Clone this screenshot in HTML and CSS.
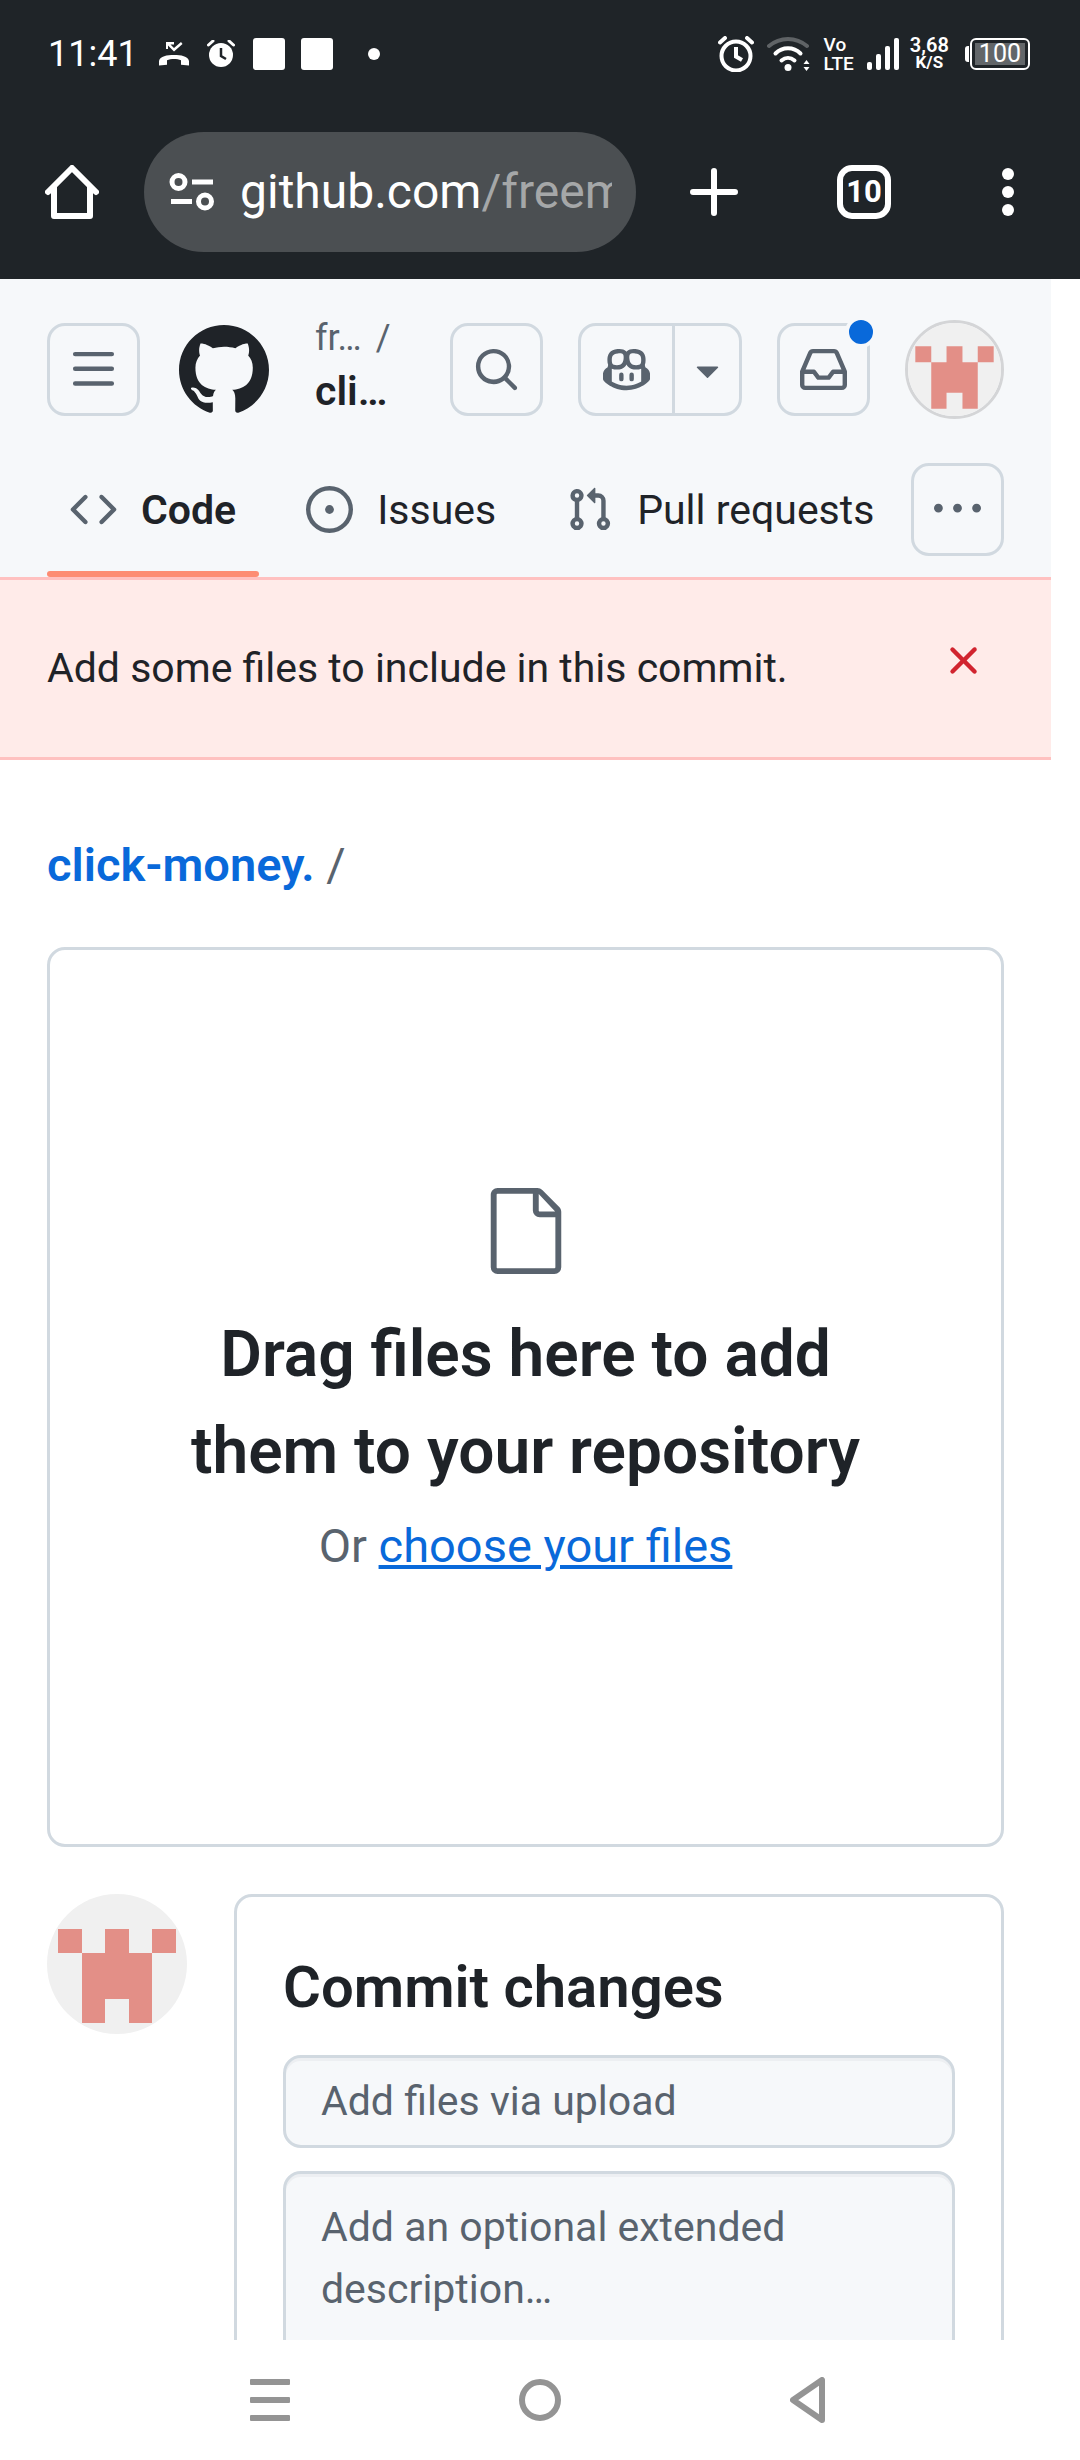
FILE: index.html
```html
<!DOCTYPE html>
<html lang="en">
<head>
<meta charset="utf-8">
<meta name="viewport" content="width=device-width, initial-scale=1">
<title>Upload files · click-money.</title>
<link rel="stylesheet" href="styles.css">
</head>
<body>
<svg class="defs" aria-hidden="true">
  <symbol id="identicon" viewBox="0 0 140 140">
    <rect width="140" height="140" fill="#f0f0f0"/>
    <path fill="#e38f87" d="M11 35h24v24h23V35h24v24h23V35h24v24h-24v70H82v-24H58v24H35V59H11Z"/>
  </symbol>
</svg>

<div class="device-top">
  <div class="status">
    <div class="status-left">
      <span class="clock">11:41</span>
      <svg width="30" height="26" viewBox="0 0 30 26" fill="#fff"><path d="M7 1h8v2.500H11.500L15 7l7-6 1.500 2L15 10.500 9 4.500V8H7Z"/><path d="M0 24.500V20c1-5 8-6 15-6s14 1 15 6v4.500l-8-.8v-4.500c-4-1.500-10-1.500-14 0v4.500Z"/></svg>
      <svg width="28" height="28" viewBox="0 0 28 28"><circle cx="14" cy="15" r="12" fill="#fff"/><path d="M1.500 5 6 1M22 1l4.500 4" stroke="#fff" stroke-width="3" stroke-linecap="round"/><path d="M14 8v8l5 3" stroke="#1f2428" stroke-width="2.500" fill="none"/></svg>
      <span class="square"></span>
      <span class="square"></span>
      <span class="dot"></span>
    </div>
    <div class="status-right">
      <svg width="36" height="36" viewBox="0 0 36 36" fill="none" stroke="#fff"><circle cx="18" cy="20" r="14.500" stroke-width="4"/><path d="M18 11v9.500l6 3.500" stroke-width="4"/><path d="M2 6.500 7 2M29 2l5 4.500" stroke-width="4" stroke-linecap="round"/></svg>
      <svg width="44" height="36" viewBox="0 0 44 36" fill="none" stroke="#fff" stroke-width="4" stroke-linecap="round"><path d="M2 10c11-9.500 27-9.500 38 0" stroke="#5f6366"/><path d="M8.500 17.500c7-7 18-7 25 0M14.500 24.500c4-3.500 9-3.500 13 0"/><circle cx="21" cy="31.500" r="3.500" fill="#fff" stroke="none"/><path d="M36.500 28 39.500 24l3 4Zm0 3h6l-3 4Z" fill="#fff" stroke="none"/></svg>
      <span class="volte"><span>Vo</span><span>LTE</span></span>
      <svg width="32" height="32" viewBox="0 0 32 32" fill="#fff"><rect y="24" width="5" height="8" rx="2"/><rect x="9" y="16" width="5" height="16" rx="2"/><rect x="18" y="8" width="5" height="24" rx="2"/><rect x="27" width="5" height="32" rx="2"/></svg>
      <span class="speed"><span class="rate">3,68</span><span class="unit">K/S</span></span>
      <span class="battery"><span class="level">100</span></span>
    </div>
  </div>
  <div class="toolbar">
    <button class="bar-button" aria-label="Home"><svg width="54" height="54" viewBox="0 0 54 54" fill="none" stroke="#fff" stroke-width="6" stroke-linecap="round" stroke-linejoin="round"><path d="M3 27 27 3l24 24M9 22v29h36V22"/></svg></button>
    <button class="address" aria-label="Address">
      <svg width="46" height="38" viewBox="0 0 46 38" fill="none" stroke="#fff" stroke-width="5"><circle cx="9.500" cy="9" r="6.500"/><path d="M23 9h21M2 28.500h21"/><circle cx="36" cy="28.500" r="6.500"/></svg>
      <span class="url">github.com<span class="path">/freemoney</span></span>
    </button>
    <button class="bar-button" aria-label="New tab"><svg width="48" height="48" viewBox="0 0 48 48" stroke="#fff" stroke-width="6" stroke-linecap="round"><path d="M24 3v42M3 24h42"/></svg></button>
    <button class="bar-button tabs-count" aria-label="Tabs">10</button>
    <button class="bar-button" aria-label="More"><svg width="12" height="48" viewBox="0 0 12 48" fill="#fff"><circle cx="6" cy="6" r="6"/><circle cx="6" cy="24" r="6"/><circle cx="6" cy="42" r="6"/></svg></button>
  </div>
</div>

<div class="viewport">
  <div class="page">
    <header class="header">
      <div class="header-row">
        <button class="icon-button" aria-label="Open menu"><svg class="icon" viewBox="0 0 16 16"><path d="M1 2.750A.75.75 0 0 1 1.750 2h12.500a.75.75 0 0 1 0 1.500H1.750A.75.75 0 0 1 1 2.750Zm0 5A.75.75 0 0 1 1.750 7h12.500a.75.75 0 0 1 0 1.500H1.750A.75.75 0 0 1 1 7.750Zm0 5a.75.75 0 0 1 .75-.75h12.500a.75.75 0 0 1 0 1.500H1.750a.75.75 0 0 1-.75-.75Z"/></svg></button>
        <a class="logo" href="#" aria-label="Homepage"><svg viewBox="1 1 22 22"><path d="M12 1C5.925 1 1 5.925 1 12c0 4.867 3.149 8.979 7.521 10.436.55.096.756-.233.756-.522 0-.262-.013-1.128-.013-2.049-2.764.509-3.479-.674-3.699-1.292-.124-.317-.66-1.293-1.127-1.554-.385-.207-.936-.715-.014-.729.866-.014 1.485.797 1.691 1.128.99 1.663 2.571 1.196 3.204.907.096-.715.385-1.196.701-1.471-2.448-.275-5.005-1.224-5.005-5.432 0-1.196.426-2.186 1.128-2.956-.111-.275-.496-1.402.11-2.915 0 0 .921-.288 3.024 1.128a10.193 10.193 0 0 1 2.750-.371c.936 0 1.871.123 2.750.371 2.104-1.430 3.025-1.128 3.025-1.128.605 1.513.221 2.640.111 2.915.701.77 1.127 1.747 1.127 2.956 0 4.222-2.571 5.157-5.019 5.432.399.344.743 1.004.743 2.035 0 1.471-.014 2.654-.014 3.025 0 .289.206.632.756.522C19.851 20.979 23 16.854 23 12c0-6.075-4.925-11-11-11Z"/></svg></a>
        <div class="context">
          <div class="owner"><a href="#">fr…</a><span>/</span></div>
          <a class="repo" href="#">cli…</a>
        </div>
        <div class="actions">
          <button class="icon-button" aria-label="Search"><svg class="icon" viewBox="0 0 16 16"><path d="M10.680 11.740a6 6 0 0 1-7.922-8.982 6 6 0 0 1 8.982 7.922l3.040 3.040a.749.749 0 0 1-.326 1.275.749.749 0 0 1-.734-.215ZM11.500 7a4.499 4.499 0 1 0-8.997 0A4.499 4.499 0 0 0 11.500 7Z"/></svg></button>
          <div class="split">
            <button class="icon-button" aria-label="Chat with Copilot"><svg class="icon" viewBox="0 0 16 16"><path fill-rule="evenodd" d="M7.998 15.035c-4.562 0-7.873-2.914-7.998-3.749V9.338c.085-.628.677-1.686 1.588-2.065.013-.07.024-.143.036-.218.029-.183.06-.384.126-.612-.201-.508-.254-1.084-.254-1.656 0-.87.128-1.769.693-2.484.579-.733 1.494-1.124 2.724-1.261 1.206-.134 2.262.034 2.944.765.05.053.096.108.139.165.044-.057.094-.112.143-.165.682-.731 1.738-.899 2.944-.765 1.230.137 2.145.528 2.724 1.261.566.715.693 1.614.693 2.484 0 .572-.053 1.148-.254 1.656.066.228.098.429.126.612.012.076.024.148.037.218.924.385 1.522 1.471 1.591 2.095v1.872c0 .766-3.351 3.795-8.002 3.795Zm0-1.485c2.280 0 4.584-1.110 5.002-1.433V7.862l-.023-.116c-.49.21-1.075.291-1.727.291-1.146 0-2.059-.327-2.710-.991A3.222 3.222 0 0 1 8 6.303a3.240 3.240 0 0 1-.544.743c-.65.664-1.563.991-2.710.991-.652 0-1.236-.081-1.727-.291l-.023.116v4.255c.419.323 2.722 1.433 5.002 1.433ZM6.762 2.830c-.193-.206-.637-.413-1.682-.297-1.019.113-1.479.404-1.713.7-.247.312-.369.789-.369 1.554 0 .793.129 1.171.308 1.371.162.181.519.379 1.442.379.853 0 1.339-.235 1.638-.54.315-.322.527-.827.617-1.553.117-.935-.037-1.395-.241-1.614Zm4.155-.297c-1.044-.116-1.488.091-1.681.297-.204.219-.359.679-.242 1.614.091.726.303 1.231.618 1.553.299.305.784.54 1.638.54.922 0 1.280-.198 1.442-.379.179-.2.308-.578.308-1.371 0-.765-.123-1.242-.37-1.554-.233-.296-.693-.587-1.713-.7Z"/><path d="M6.250 9.037a.75.75 0 0 1 .75.75v1.501a.75.75 0 0 1-1.500 0V9.787a.75.75 0 0 1 .75-.75Zm4.250.75v1.501a.75.75 0 0 1-1.500 0V9.787a.75.75 0 0 1 1.500 0Z"/></svg></button>
            <button class="icon-button caret" aria-label="Open Copilot menu"><svg class="icon" viewBox="0 0 16 16"><path d="m4.427 7.427 3.396 3.396a.25.25 0 0 0 .354 0l3.396-3.396A.25.25 0 0 0 11.396 7H4.604a.25.25 0 0 0-.177.427Z"/></svg></button>
          </div>
          <button class="icon-button inbox" aria-label="Notifications"><svg class="icon" viewBox="0 0 16 16"><path d="M2.800 2.060A1.750 1.750 0 0 1 4.410 1h7.180c.7 0 1.333.417 1.610 1.060l2.740 6.395c.04.093.06.194.06.295v4.500A1.750 1.750 0 0 1 14.250 15H1.750A1.750 1.750 0 0 1 0 13.250v-4.500c0-.101.02-.202.06-.295Zm1.610.44a.25.25 0 0 0-.23.152L1.887 8H4.750a.75.75 0 0 1 .6.3L6.625 10h2.750l1.275-1.700a.75.75 0 0 1 .6-.3h2.863L11.820 2.652a.25.25 0 0 0-.23-.152Zm10.090 7h-2.875l-1.275 1.700a.75.75 0 0 1-.6.3h-3.500a.75.75 0 0 1-.6-.3L4.375 9.500H1.500v3.750c0 .138.112.25.25.25h12.500a.25.25 0 0 0 .25-.25Z"/></svg><span class="unread"></span></button>
          <button class="avatar-button" aria-label="Open user menu"><svg><use href="#identicon"/></svg></button>
        </div>
      </div>
      <nav class="tabs" aria-label="Repository">
        <a class="tab current" href="#"><svg class="icon" viewBox="0 0 16 16"><path d="m11.280 3.220 4.250 4.250a.75.75 0 0 1 0 1.060l-4.250 4.250a.749.749 0 0 1-1.275-.326.749.749 0 0 1 .215-.734L13.940 8l-3.720-3.720a.749.749 0 0 1 .326-1.275.749.749 0 0 1 .734.215Zm-6.560 0a.751.751 0 0 1 1.042.018.751.751 0 0 1 .018 1.042L2.060 8l3.720 3.720a.749.749 0 0 1-.326 1.275.749.749 0 0 1-.734-.215L.47 8.530a.75.75 0 0 1 0-1.060Z"/></svg>Code</a>
        <a class="tab" href="#"><svg class="icon" viewBox="0 0 16 16"><path d="M8 9.500a1.500 1.500 0 1 0 0-3 1.500 1.500 0 0 0 0 3Z"/><path d="M8 0a8 8 0 1 1 0 16A8 8 0 0 1 8 0ZM1.500 8a6.500 6.500 0 1 0 13 0 6.500 6.500 0 0 0-13 0Z"/></svg>Issues</a>
        <a class="tab" href="#"><svg class="icon" viewBox="0 0 16 16"><path d="M1.500 3.250a2.250 2.250 0 1 1 3 2.122v5.256a2.251 2.251 0 1 1-1.500 0V5.372A2.250 2.250 0 0 1 1.500 3.250Zm5.677-.177L9.573.677A.25.25 0 0 1 10 .854V2.500h1A2.500 2.500 0 0 1 13.500 5v5.628a2.251 2.251 0 1 1-1.500 0V5a1 1 0 0 0-1-1h-1v1.646a.25.25 0 0 1-.427.177L7.177 3.427a.25.25 0 0 1 0-.354ZM3.750 2.500a.75.75 0 1 0 0 1.500.75.75 0 0 0 0-1.500Zm0 9.500a.75.75 0 1 0 0 1.500.75.75 0 0 0 0-1.500Zm8.250.75a.75.75 0 1 0 1.500 0 .75.75 0 0 0-1.500 0Z"/></svg>Pull requests</a>
        <button class="icon-button more" aria-label="More items"><svg class="icon" viewBox="0 0 16 16"><path d="M8 9a1.500 1.500 0 1 0 0-3 1.500 1.500 0 0 0 0 3ZM1.500 9a1.500 1.500 0 1 0 0-3 1.500 1.500 0 0 0 0 3Zm13 0a1.500 1.500 0 1 0 0-3 1.500 1.500 0 0 0 0 3Z"/></svg></button>
      </nav>
    </header>

    <div class="flash" role="alert">
      <span>Add some files to include in this commit.</span>
      <button class="dismiss" aria-label="Dismiss"><svg class="icon" viewBox="0 0 16 16"><path d="M3.720 3.720a.75.75 0 0 1 1.060 0L8 6.940l3.220-3.220a.749.749 0 0 1 1.275.326.749.749 0 0 1-.215.734L9.060 8l3.220 3.220a.749.749 0 0 1-.326 1.275.749.749 0 0 1-.734-.215L8 9.060l-3.220 3.220a.751.751 0 0 1-1.042-.018.751.751 0 0 1-.018-1.042L6.940 8 3.720 4.780a.75.75 0 0 1 0-1.060Z"/></svg></button>
    </div>

    <main class="content">
      <div class="breadcrumb"><a href="#">click-money.</a> <span>/</span></div>

      <section class="dropzone">
        <svg class="file-icon" viewBox="0 0 24 24"><path d="M3 2.750C3 1.784 3.784 1 4.750 1h10.172c.464 0 .909.184 1.237.513l4.328 4.328c.329.328.513.773.513 1.237V21.250A1.750 1.750 0 0 1 19.250 23H4.750A1.750 1.750 0 0 1 3 21.250Zm1.750-.25a.25.25 0 0 0-.25.25v18.500c0 .138.112.25.25.25h14.500a.25.25 0 0 0 .25-.25V8.500h-4A1.750 1.750 0 0 1 13.750 6.750V2.500Zm10.500.062V6.750c0 .138.112.25.25.25h3.938Z"/></svg>
        <h1>Drag files here to add them to your repository</h1>
        <p>Or <a href="#">choose your files</a></p>
      </section>

      <section class="commit">
        <svg class="author"><use href="#identicon"/></svg>
        <form class="commit-form">
          <h2>Commit changes</h2>
          <input type="text" aria-label="Commit message" placeholder="Add files via upload">
          <textarea rows="4" aria-label="Extended description" placeholder="Add an optional extended description…"></textarea>
        </form>
      </section>
    </main>
  </div>
</div>

<div class="system-nav">
  <button aria-label="Recent apps"><svg width="40" height="42" viewBox="0 0 40 42" fill="#949494"><rect width="40" height="6" rx="1"/><rect y="18" width="40" height="6" rx="1"/><rect y="36" width="40" height="6" rx="1"/></svg></button>
  <button aria-label="Home screen"><svg width="42" height="42" viewBox="0 0 42 42" fill="none" stroke="#949494" stroke-width="6"><circle cx="21" cy="21" r="18"/></svg></button>
  <button aria-label="Back"><svg width="40" height="46" viewBox="0 0 40 46" fill="none" stroke="#949494" stroke-width="6" stroke-linejoin="round"><path d="M32 3v40L3 23Z"/></svg></button>
</div>
</body>
</html>
```
FILE: styles.css
```css
* {
  box-sizing: border-box;
}

body {
  margin: 0;
  height: 100vh;
  display: flex;
  flex-direction: column;
  background: #fff;
  color: #1f2328;
  font-family: Roboto, "Liberation Sans", sans-serif;
  font-size: 41px;
  line-height: 62px;
}

a {
  color: inherit;
  text-decoration: none;
}

button {
  margin: 0;
  padding: 0;
  border: 0;
  background: none;
  color: inherit;
  font: inherit;
}

svg {
  display: block;
  flex: none;
}

.defs {
  position: absolute;
  width: 0;
  height: 0;
}

/* Device status bar and browser toolbar */

.device-top {
  flex: none;
  background: #1f2428;
  color: #fff;
}

.status {
  display: flex;
  justify-content: space-between;
  align-items: center;
  height: 108px;
  padding: 0 50px 0 48px;
}

.status-left,
.status-right {
  display: flex;
  align-items: center;
}

.status-left {
  gap: 18px;
}

.clock {
  margin-right: 3px;
  font-size: 36px;
}

.square {
  width: 32px;
  height: 32px;
  border-radius: 3px;
  background: #fff;
}

.square + .square {
  margin-left: -2px;
}

.dot {
  width: 12px;
  height: 12px;
  margin-left: 17px;
  border-radius: 50%;
  background: #fff;
}

.status-right {
  gap: 13px;
}

.volte,
.speed {
  display: flex;
  flex-direction: column;
  font-size: 19px;
  font-weight: 500;
  line-height: 19px;
}

.speed {
  align-items: center;
  margin-left: -2px;
  line-height: 17px;
}

.speed .rate {
  font-size: 20px;
  font-weight: 600;
}

.speed .unit {
  font-size: 17px;
  font-weight: 700;
}

.battery {
  position: relative;
  margin-left: 8px;
  padding: 3px;
  border: 2px solid #fff;
  border-radius: 6px;
}

.battery::before {
  content: "";
  position: absolute;
  left: -7px;
  top: 6px;
  width: 4px;
  height: 16px;
  border-radius: 3px 0 0 3px;
  background: #fff;
}

.level {
  display: block;
  padding: 0 4px;
  background: #626669;
  font-size: 25px;
  line-height: 22px;
}

.toolbar {
  display: flex;
  align-items: center;
  height: 171px;
  padding: 0 66px 3px 45px;
}

.bar-button {
  flex: none;
}

.address {
  flex: 1;
  min-width: 0;
  display: flex;
  align-items: center;
  gap: 25px;
  height: 120px;
  margin: 0 54px 0 45px;
  padding: 0 24px 0 25px;
  border-radius: 60px;
  background: #4b4f52;
  text-align: left;
}

.url {
  flex: 1;
  overflow: hidden;
  white-space: nowrap;
  font-size: 48px;
}

.path {
  color: #a5a7a8;
}

.tabs-count {
  width: 54px;
  height: 54px;
  margin: 0 111px 0 99px;
  border: 6px solid #fff;
  border-radius: 15px;
  font-size: 31px;
  font-weight: 700;
  line-height: 42px;
}

/* Web page */

.viewport {
  flex: 1;
  min-height: 0;
  overflow: hidden;
}

.page {
  margin-right: 29px;
}

.icon {
  width: 47px;
  height: 47px;
  fill: currentColor;
}

.header {
  padding: 33px 47px 0;
  background: #f6f8fa;
}

.header-row {
  display: flex;
  align-items: center;
  height: 115px;
}

.icon-button {
  flex: none;
  display: flex;
  align-items: center;
  justify-content: center;
  width: 93px;
  height: 93px;
  border: 3px solid #d1d9e0;
  border-radius: 18px;
  color: #59636e;
}

.logo {
  margin-left: 39px;
}

.logo svg {
  width: 90px;
  height: 90px;
  fill: #1f2328;
}

.context {
  flex: 1;
  align-self: flex-start;
  min-width: 0;
  margin-left: 46px;
  line-height: 53px;
}

.owner {
  display: flex;
  gap: 14px;
  color: #59636e;
  font-size: 36px;
}

.repo {
  display: block;
  font-weight: 600;
}

.actions {
  display: flex;
  align-items: center;
  gap: 35px;
}

.split {
  display: flex;
}

.split .icon-button:first-child {
  width: 97px;
  border-radius: 18px 0 0 18px;
}

.split .caret {
  width: 70px;
  margin-left: -3px;
  border-radius: 0 18px 18px 0;
}

.inbox {
  position: relative;
}

.unread {
  position: absolute;
  top: -10px;
  right: -10px;
  width: 32px;
  height: 32px;
  border: 4px solid #f6f8fa;
  border-radius: 50%;
  background: #0969da;
}

.avatar-button svg {
  width: 99px;
  height: 99px;
  border: 3px solid #d4d5d7;
  border-radius: 50%;
}

.tabs {
  display: flex;
  gap: 24px;
  padding-top: 36px;
}

.tab {
  position: relative;
  display: flex;
  align-items: center;
  gap: 24px;
  padding: 0 23px 21px;
  white-space: nowrap;
}

.tab:last-of-type {
  padding-right: 0;
}

.tab .icon {
  color: #59636e;
}

.current {
  font-weight: 600;
}

.current::after {
  content: "";
  position: absolute;
  left: 0;
  right: 0;
  bottom: 0;
  height: 6px;
  border-radius: 3px;
  background: #fd8c73;
}

.more {
  margin: 0 0 21px auto;
}

.flash {
  display: flex;
  justify-content: space-between;
  align-items: flex-start;
  padding: 57px 64px 58px 47px;
  border: solid #ffc1c0;
  border-width: 3px 0;
  background: #ffebe9;
}

.dismiss {
  color: #d1242f;
}

.content {
  padding: 70px 47px 47px;
}

.breadcrumb {
  margin-bottom: 47px;
  color: #59636e;
  font-size: 47px;
  line-height: 70px;
}

.breadcrumb a {
  color: #0969da;
  font-weight: 600;
}

.dropzone {
  padding: 234px 94px 263px;
  border: 3px solid #d1d9e0;
  border-radius: 18px;
  text-align: center;
}

.file-icon {
  width: 94px;
  height: 94px;
  margin: 0 auto 28px;
  fill: #59636e;
}

.dropzone h1 {
  margin: 0 0 11px;
  font-size: 64px;
  font-weight: 600;
  line-height: 97px;
}

.dropzone p {
  margin: 0;
  color: #59636e;
  font-size: 47px;
  line-height: 70px;
}

.dropzone a {
  color: #0969da;
  text-decoration: underline;
}

.commit {
  display: flex;
  align-items: flex-start;
  gap: 47px;
  margin-top: 47px;
}

.author {
  width: 140px;
  height: 140px;
  border-radius: 50%;
}

.commit-form {
  flex: 1;
  min-width: 0;
  padding: 46px;
  border: 3px solid #d1d9e0;
  border-radius: 18px;
}

.commit-form h2 {
  margin: 0 0 24px;
  font-size: 58px;
  font-weight: 600;
  line-height: 88px;
}

.commit-form input,
.commit-form textarea {
  display: block;
  width: 100%;
  margin: 0;
  border: 3px solid #d1d9e0;
  border-radius: 18px;
  background: #f6f8fa;
  box-shadow: inset 0 3px 0 rgba(31, 35, 40, 0.04);
  color: #1f2328;
  font: inherit;
}

.commit-form input {
  height: 93px;
  margin-bottom: 23px;
  padding: 0 35px 2px;
}

.commit-form textarea {
  padding: 22px 35px;
  resize: none;
}

::placeholder {
  color: #59636e;
  opacity: 1;
}

/* System navigation bar */

.system-nav {
  flex: none;
  display: grid;
  grid-template-columns: repeat(3, 1fr);
  height: 120px;
  padding: 0 135px;
  background: #fff;
}

.system-nav button {
  display: flex;
  align-items: center;
  justify-content: center;
}
```
